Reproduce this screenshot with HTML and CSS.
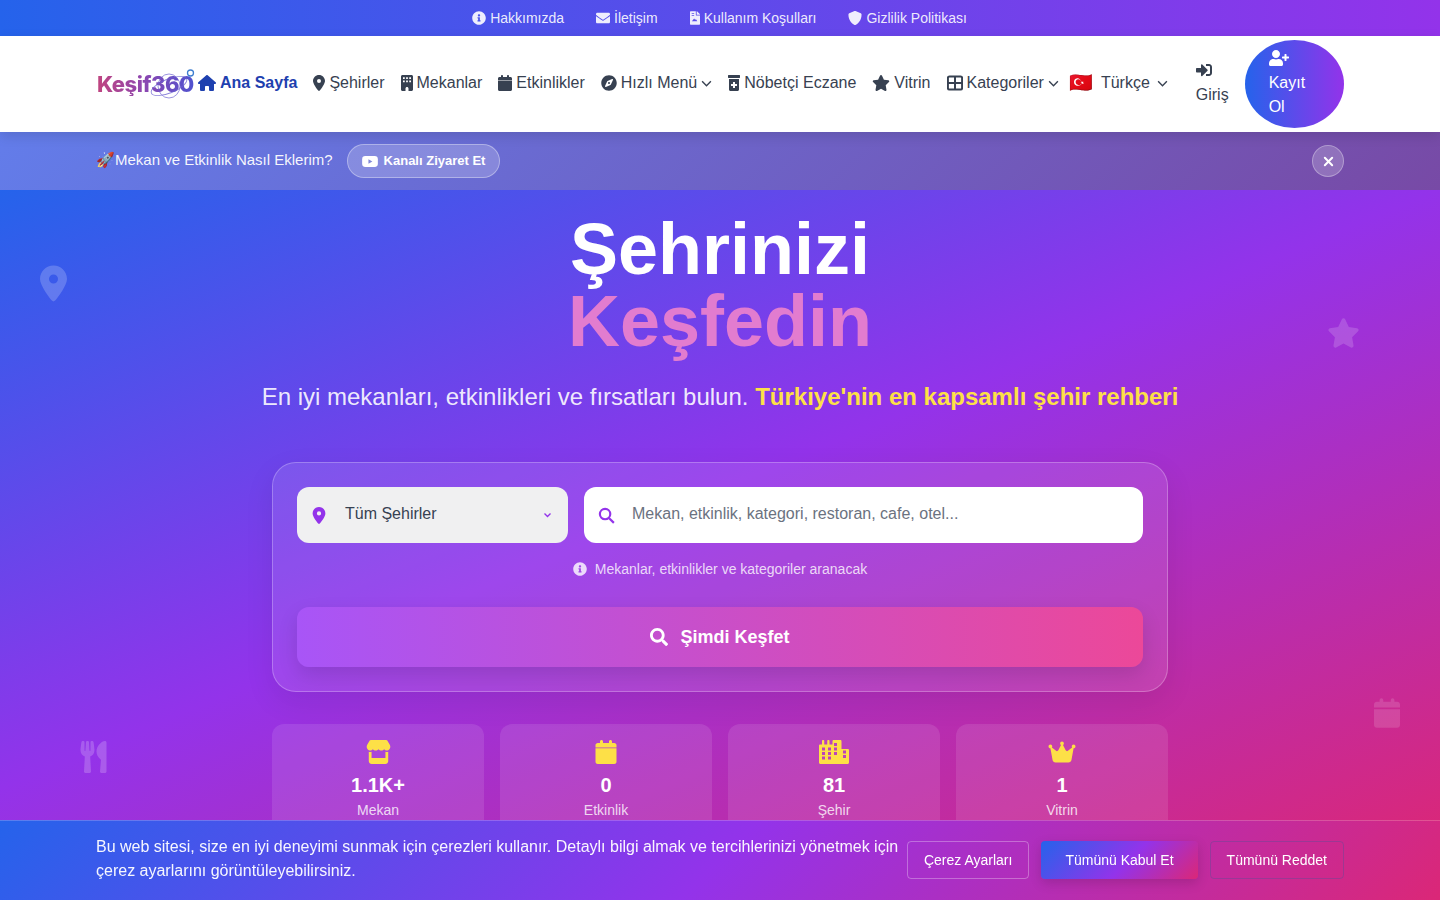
FILE: index.html
```html
<!DOCTYPE html>
<html lang="tr">
<head>
<meta charset="utf-8">
<title>Keşif360</title>
<link rel="stylesheet" href="styles.css">
</head>
<body>
<div class="topbar">
  <a class="top-link"><svg class="ti" viewBox="0 0 512 512"><path d="M256 8C119.043 8 8 119.083 8 256c0 136.997 111.043 248 248 248s248-111.003 248-248C504 119.083 392.957 8 256 8zm0 110c23.196 0 42 18.804 42 42s-18.804 42-42 42-42-18.804-42-42 18.804-42 42-42zm56 254c0 6.627-5.373 12-12 12h-88c-6.627 0-12-5.373-12-12v-24c0-6.627 5.373-12 12-12h12v-64h-12c-6.627 0-12-5.373-12-12v-24c0-6.627 5.373-12 12-12h64c6.627 0 12 5.373 12 12v100h12c6.627 0 12 5.373 12 12v24z"/></svg>Hakkımızda</a>
  <a class="top-link"><svg class="ti" viewBox="0 0 512 512"><path d="M502.3 190.8c3.9-3.1 9.7-.2 9.7 4.7V400c0 26.5-21.5 48-48 48H48c-26.5 0-48-21.5-48-48V195.6c0-5 5.7-7.8 9.7-4.7 22.4 17.4 52.1 39.5 154.1 113.6 21.1 15.4 56.7 47.8 92.2 47.6 35.7.3 72-32.8 92.3-47.6 102-74.1 131.6-96.3 154-113.7zM256 320c23.2.4 56.6-29.2 73.4-41.4 132.7-96.3 142.8-104.7 173.4-128.7 5.8-4.5 9.2-11.5 9.2-18.9v-19c0-26.5-21.5-48-48-48H48C21.5 64 0 85.5 0 112v19c0 7.4 3.4 14.3 9.2 18.9 30.6 23.9 40.7 32.4 173.4 128.7 16.8 12.2 50.2 41.8 73.4 41.4z"/></svg>İletişim</a>
  <a class="top-link"><svg class="ti ti-doc" viewBox="0 0 384 512"><path fill-rule="evenodd" d="M224 136V0H24C10.700 0 0 10.700 0 24v464c0 13.300 10.700 24 24 24h336c13.300 0 24-10.700 24-24V160H248c-13.200 0-24-10.800-24-24zM64 72h96v32H64zm0 64h96v32H64zm48 200l48-64 40 56 24-32 56 80H72zM384 122v6H256V0h6c6.400 0 12.500 2.500 17 7l98 98c4.500 4.500 7 10.600 7 17z"/></svg>Kullanım Koşulları</a>
  <a class="top-link"><svg class="ti" viewBox="0 0 512 512"><path d="M466.500 83.700l-192-80a48.150 48.150 0 0 0-36.900 0l-192 80C27.700 91.100 16 108.600 16 128c0 198.500 114.500 335.700 221.500 380.300 11.800 4.900 25.100 4.900 36.900 0C360.100 472.600 496 349.300 496 128c0-19.400-11.700-36.900-29.500-44.300z"/></svg>Gizlilik Politikası</a>
</div>

<header class="navbar">
  <a class="logo"><span class="logo-text">Keşif360</span>
    <svg class="logo-orbit" viewBox="0 0 100 34"><g fill="none" stroke="#6a5fd0" stroke-width=".9" opacity=".75"><ellipse cx="73" cy="19" rx="19" ry="7" transform="rotate(-22 73 19)"/><ellipse cx="73" cy="19" rx="11" ry="12"/></g><circle cx="94.500" cy="6" r="3" fill="none" stroke="#3f7fd0" stroke-width="1.300"/></svg>
  </a>
  <nav class="nav-list">
    <a class="nav-link active"><svg class="ni w18" viewBox="0 0 576 512"><path d="M575.800 255.500c0 18-15 32.100-32 32.100h-32l.7 160.200c0 2.700-.2 5.400-.5 8.100V472c0 22.100-17.900 40-40 40H456c-1.100 0-2.200 0-3.300-.1c-1.400 .1-2.800 .1-4.200 .1H416 392c-22.100 0-40-17.900-40-40V448 384c0-17.700-14.300-32-32-32H256c-17.700 0-32 14.300-32 32v64 24c0 22.100-17.900 40-40 40H160 128.100c-1.500 0-3-.1-4.500-.2c-1.200 .1-2.400 .2-3.600 .2H104c-22.100 0-40-17.900-40-40V360c0-.9 0-1.900 .1-2.800V287.600H32c-18 0-32-14-32-32.100c0-9 3-17 10-24L266.400 8c7-7 15-8 22-8s15 2 21 7L564.800 231.500c8 7 12 15 11 24z"/></svg>Ana Sayfa</a>
    <a class="nav-link"><svg class="ni w12" viewBox="0 0 384 512"><path d="M215.700 499.200C267 435 384 279.400 384 192C384 86 298 0 192 0S0 86 0 192c0 87.400 117 243 168.300 307.200c12.300 15.300 35.100 15.300 47.400 0zM192 128a64 64 0 1 1 0 128 64 64 0 1 1 0-128z"/></svg>Şehirler</a>
    <a class="nav-link"><svg class="ni w12" viewBox="0 0 384 512"><path fill-rule="evenodd" d="M48 0h288c26.500 0 48 21.500 48 48v416c0 26.500-21.500 48-48 48H240v-80c0-26.500-21.500-48-48-48s-48 21.500-48 48v80H48c-26.500 0-48-21.500-48-48V48C0 21.500 21.500 0 48 0zM64 72v56h56V72zm100 0v56h56V72zm100 0v56h56V72zM64 172v56h56v-56zm100 0v56h56v-56zm100 0v56h56v-56z"/></svg>Mekanlar</a>
    <a class="nav-link"><svg class="ni w14" viewBox="0 0 448 512"><path d="M96 32V64H48C21.500 64 0 85.500 0 112v56H448V112c0-26.500-21.500-48-48-48H352V32c0-17.700-14.300-32-32-32s-32 14.300-32 32V64H160V32c0-17.700-14.300-32-32-32S96 14.300 96 32zM448 184H0V464c0 26.500 21.500 48 48 48H400c26.500 0 48-21.500 48-48V184z"/></svg>Etkinlikler</a>
    <a class="nav-link"><svg class="ni w16" viewBox="0 0 496 512"><path d="M225.380 233.370c-12.500 12.500-12.500 32.760 0 45.250 12.490 12.500 32.760 12.500 45.250 0 12.500-12.500 12.500-32.760 0-45.250-12.500-12.490-32.760-12.490-45.250 0zM248 8C111 8 0 119 0 256s111 248 248 248 248-111 248-248S385 8 248 8zm126.140 148.050L308.170 300.400a31.938 31.938 0 0 1-15.770 15.770l-144.340 65.970c-16.650 7.610-33.810-9.550-26.200-26.200l65.980-144.350a31.938 31.938 0 0 1 15.770-15.770l144.340-65.970c16.650-7.600 33.800 9.550 26.190 26.200z"/></svg>Hızlı Menü<svg class="chev" viewBox="0 0 12 8"><path d="M1 1.500l5 5 5-5"/></svg></a>
    <a class="nav-link"><svg class="ni w12" viewBox="0 0 384 512"><path fill-rule="evenodd" d="M16 0h352c8.800 0 16 7.200 16 16v64c0 8.800-7.200 16-16 16H16C7.200 96 0 88.800 0 80V16C0 7.200 7.200 0 16 0zM32 128h320v336c0 26.500-21.500 48-48 48H80c-26.500 0-48-21.500-48-48V128zm128 96v64h-64v64h64v64h64v-64h64v-64h-64v-64z"/></svg>Nöbetçi Eczane</a>
    <a class="nav-link"><svg class="ni w18" viewBox="0 0 576 512"><path d="M316.900 18C311.600 7 300.400 0 288.100 0s-23.400 7-28.800 18L195 150.300 51.400 171.500c-12 1.800-22 10.200-25.700 21.700s-.7 24.200 7.900 32.700L137.800 329 113.200 474.700c-2 12 3 24.200 12.900 31.300s23 8 33.800 2.300l128.300-68.500 128.300 68.500c10.800 5.700 23.900 4.900 33.800-2.300s14.900-19.300 12.900-31.300L438.500 329 542.700 225.900c8.600-8.500 11.700-21.200 7.900-32.700s-13.700-19.900-25.700-21.700L381.200 150.300 316.900 18z"/></svg>Vitrin</a>
    <a class="nav-link"><svg class="ni w16 grid-ic" viewBox="0 0 16 16"><rect x=".9" y="1.500" width="14.200" height="13" rx="1.500"/><path d="M8 1.500v13M1 8h14"/></svg>Kategoriler<svg class="chev" viewBox="0 0 12 8"><path d="M1 1.500l5 5 5-5"/></svg></a>
    <a class="nav-link lang"><span class="flag">🇹🇷</span><span class="lang-name">Türkçe</span><svg class="chev" viewBox="0 0 12 8"><path d="M1 1.500l5 5 5-5"/></svg></a>
    <a class="nav-link login"><svg class="ni w16" viewBox="0 0 512 512"><path d="M416 448h-84c-6.600 0-12-5.400-12-12v-40c0-6.600 5.400-12 12-12h84c17.700 0 32-14.300 32-32V160c0-17.700-14.300-32-32-32h-84c-6.600 0-12-5.400-12-12V76c0-6.600 5.400-12 12-12h84c53 0 96 43 96 96v192c0 53-43 96-96 96zm-47-201L201 79c-15-15-41-4.500-41 17v96H24c-13.300 0-24 10.700-24 24v96c0 13.300 10.700 24 24 24h136v96c0 21.500 26 32 41 17l168-168c9.300-9.400 9.300-24.600 0-34z"/></svg><span>Giriş</span></a>
    <a class="register"><svg class="ni reg-ic" viewBox="0 0 640 512"><path d="M624 208h-64v-64c0-8.800-7.200-16-16-16h-32c-8.800 0-16 7.200-16 16v64h-64c-8.800 0-16 7.200-16 16v32c0 8.800 7.200 16 16 16h64v64c0 8.800 7.200 16 16 16h32c8.800 0 16-7.200 16-16v-64h64c8.800 0 16-7.200 16-16v-32c0-8.800-7.200-16-16-16zm-400 48c70.700 0 128-57.300 128-128S294.700 0 224 0 96 57.300 96 128s57.300 128 128 128zm89.600 32h-16.700c-22.200 10.200-46.900 16-72.900 16s-50.600-5.800-72.900-16h-16.700C60.200 288 0 348.200 0 422.400V464c0 26.500 21.500 48 48 48h352c26.500 0 48-21.500 48-48v-41.600c0-74.200-60.200-134.400-134.400-134.400z"/></svg><span>Kayıt</span><span>Ol</span></a>
  </nav>
</header>

<main class="stage">
  <div class="banner">
    <div class="banner-left">
      <span class="banner-text">🚀Mekan ve Etkinlik Nasıl Eklerim?</span>
      <a class="channel-btn"><svg class="yt" viewBox="0 0 20 14"><rect width="20" height="14" rx="4" fill="#fff"/><path d="M8 4.200v5.600L13 7z" fill="#8188d8"/></svg>Kanalı Ziyaret Et</a>
    </div>
    <button class="close-btn" aria-label="Kapat"><svg viewBox="0 0 12 12"><path d="M2 2l8 8M10 2l-8 8"/></svg></button>
  </div>

  <section class="hero">
    <svg class="deco deco-pin" viewBox="0 0 384 512"><path d="M215.700 499.200C267 435 384 279.400 384 192C384 86 298 0 192 0S0 86 0 192c0 87.400 117 243 168.300 307.200c12.300 15.300 35.100 15.300 47.400 0zM192 128a64 64 0 1 1 0 128 64 64 0 1 1 0-128z"/></svg>
    <svg class="deco deco-star" viewBox="0 0 576 512"><path d="M316.900 18C311.600 7 300.400 0 288.100 0s-23.400 7-28.800 18L195 150.300 51.400 171.500c-12 1.800-22 10.200-25.700 21.700s-.7 24.200 7.900 32.700L137.800 329 113.200 474.700c-2 12 3 24.200 12.900 31.300s23 8 33.800 2.300l128.300-68.500 128.300 68.500c10.800 5.700 23.900 4.900 33.800-2.300s14.900-19.300 12.900-31.300L438.500 329 542.700 225.900c8.600-8.500 11.700-21.200 7.900-32.700s-13.700-19.900-25.700-21.700L381.200 150.300 316.900 18z"/></svg>
    <svg class="deco deco-food" viewBox="0 0 416 512"><path d="M207.900 15.200c.8 4.700 16.100 94.500 16.100 128.800 0 52.300-27.800 89.600-68.900 104.600L168 486.700c.7 13.700-10.200 25.300-24 25.300H80c-13.700 0-24.700-11.500-24-25.300l12.900-238.100C27.700 233.600 0 196.200 0 144 0 109.600 15.300 19.900 16.100 15.200 19.300-5.100 61.400-5.400 64 16.300v141.200c1.300 3.400 15.100 3.200 16 0 1.400-25.300 7.900-139.200 8-141.800 3.300-20.800 44.700-20.800 47.900 0 .2 2.700 6.600 116.500 8 141.800.9 3.200 14.800 3.400 16 0V16.300c2.600-21.600 44.800-21.400 48 0zm119.200 285.700l-15 185.100c-1.200 14 9.900 26 23.900 26h56c13.300 0 24-10.700 24-24V24c0-13.200-10.700-24-24-24-82.500 0-221.400 178.500-64.900 300.900z"/></svg>
    <svg class="deco deco-cal" viewBox="0 0 448 512"><path d="M96 32V64H48C21.500 64 0 85.500 0 112v48H448V112c0-26.500-21.500-48-48-48H352V32c0-17.700-14.300-32-32-32s-32 14.300-32 32V64H160V32c0-17.700-14.300-32-32-32S96 14.300 96 32zM448 192H0V464c0 26.500 21.500 48 48 48H400c26.500 0 48-21.500 48-48V192z"/></svg>

    <h1 class="title">Şehrinizi<span class="title-accent">Keşfedin</span></h1>
    <p class="subtitle">En iyi mekanları, etkinlikleri ve fırsatları bulun. <strong>Türkiye'nin en kapsamlı şehir rehberi</strong></p>

    <form class="search-card">
      <div class="search-row">
        <div class="city-select">
          <svg class="pin-ic" viewBox="0 0 384 512"><path d="M215.700 499.200C267 435 384 279.400 384 192C384 86 298 0 192 0S0 86 0 192c0 87.400 117 243 168.300 307.200c12.300 15.300 35.100 15.300 47.400 0zM192 128a64 64 0 1 1 0 128 64 64 0 1 1 0-128z"/></svg>
          <span class="city-name">Tüm Şehirler</span>
          <svg class="select-chev" viewBox="0 0 12 8"><path d="M2 2l4 4 4-4"/></svg>
        </div>
        <div class="search-input">
          <svg class="search-ic" viewBox="0 0 18 18"><circle cx="7.500" cy="7.500" r="5.500"/><path d="M11.800 11.800l5 5"/></svg>
          <span class="placeholder">Mekan, etkinlik, kategori, restoran, cafe, otel...</span>
        </div>
      </div>
      <p class="hint"><svg class="hint-ic" viewBox="0 0 512 512"><path d="M256 8C119.043 8 8 119.083 8 256c0 136.997 111.043 248 248 248s248-111.003 248-248C504 119.083 392.957 8 256 8zm0 110c23.196 0 42 18.804 42 42s-18.804 42-42 42-42-18.804-42-42 18.804-42 42-42zm56 254c0 6.627-5.373 12-12 12h-88c-6.627 0-12-5.373-12-12v-24c0-6.627 5.373-12 12-12h12v-64h-12c-6.627 0-12-5.373-12-12v-24c0-6.627 5.373-12 12-12h64c6.627 0 12 5.373 12 12v100h12c6.627 0 12 5.373 12 12v24z"/></svg>Mekanlar, etkinlikler ve kategoriler aranacak</p>
      <button class="explore-btn" type="button"><svg viewBox="0 0 512 512"><path d="M505 442.700L405.300 343c-4.500-4.500-10.600-7-17-7H372c27.600-35.300 44-79.700 44-128C416 93.100 322.900 0 208 0S0 93.100 0 208s93.100 208 208 208c48.300 0 92.700-16.400 128-44v16.300c0 6.400 2.500 12.500 7 17l99.700 99.700c9.400 9.400 24.600 9.400 33.900 0l28.300-28.300c9.400-9.400 9.400-24.600.1-34zM208 336c-70.700 0-128-57.200-128-128 0-70.700 57.200-128 128-128 70.700 0 128 57.200 128 128 0 70.700-57.200 128-128 128z"/></svg>Şimdi Keşfet</button>
    </form>

    <div class="stats">
      <div class="stat"><svg class="stat-ic ic-store" viewBox="0 0 576 512" preserveAspectRatio="none"><path d="M547.600 103.800L490.300 13.100C485.200 5 476.100 0 466.400 0H109.600C99.900 0 90.800 5 85.700 13.100L28.300 103.800c-29.600 46.800-3.400 111.900 51.900 119.400c4 .5 8.100 .8 12.100 .8c26.100 0 49.300-11.400 65.200-29c15.900 17.600 39.100 29 65.200 29c26.100 0 49.300-11.400 65.200-29c15.900 17.600 39.100 29 65.200 29c26.200 0 49.300-11.400 65.200-29c16 17.600 39.100 29 65.200 29c4.100 0 8.100-.3 12.100-.8c55.500-7.400 81.800-72.500 52.100-119.400zM499.700 254.900l-.1 0c-5.300 .7-10.700 1.100-16.200 1.100c-12.400 0-24.300-1.900-35.400-5.300V384H128V250.600c-11.200 3.500-23.200 5.400-35.600 5.400c-5.500 0-11-.4-16.300-1.100l-.1 0c-4.100-.6-8.100-1.300-12-2.300V384v64c0 35.300 28.700 64 64 64H448c35.300 0 64-28.700 64-64V384 252.600c-4 1-8 1.800-12.300 2.300z"/></svg><b class="stat-num">1.1K+</b><span class="stat-label">Mekan</span></div>
      <div class="stat"><svg class="stat-ic" viewBox="0 0 448 512"><path d="M96 32V64H48C21.500 64 0 85.500 0 112v48H448V112c0-26.500-21.500-48-48-48H352V32c0-17.700-14.300-32-32-32s-32 14.300-32 32V64H160V32c0-17.700-14.300-32-32-32S96 14.300 96 32zM448 176H0V464c0 26.500 21.500 48 48 48H400c26.500 0 48-21.500 48-48V176z"/></svg><b class="stat-num">0</b><span class="stat-label">Etkinlik</span></div>
      <div class="stat"><svg class="stat-ic" viewBox="0 0 640 512"><path fill-rule="evenodd" d="M616 192H480V24c0-13.260-10.740-24-24-24H312c-13.260 0-24 10.740-24 24v72h-64V16c0-8.840-7.160-16-16-16h-16c-8.840 0-16 7.160-16 16v80h-64V16c0-8.840-7.160-16-16-16H80c-8.840 0-16 7.160-16 16v80H24c-13.260 0-24 10.740-24 24v360c0 17.670 14.330 32 32 32h576c17.670 0 32-14.330 32-32V216c0-13.260-10.750-24-24-24zM64 352h64v64H64zm0-96h64v64H64zm0-96h64v64H64zm128 192h64v64h-64zm0-96h64v64h-64zm0-96h64v64h-64zm128 96h64v64h-64zm0-96h64v64h-64zm0-96h64v64h-64zm192 256h64v64h-64zm0-96h64v64h-64z"/></svg><b class="stat-num">81</b><span class="stat-label">Şehir</span></div>
      <div class="stat"><svg class="stat-ic" viewBox="0 0 576 512"><path d="M309 106c11.400-7 19-19.700 19-34c0-22.100-17.900-40-40-40s-40 17.900-40 40c0 14.400 7.600 27 19 34L209.700 220.600c-9.100 18.200-32.700 23.400-48.600 10.700L72 160c5-6.700 8-15 8-24c0-22.100-17.900-40-40-40S0 113.900 0 136s17.900 40 40 40c.2 0 .5 0 .7 0L86.400 427.400c5.500 30.400 32 52.600 63 52.600H426.600c30.900 0 57.400-22.100 63-52.600L535.300 176c.2 0 .5 0 .7 0c22.100 0 40-17.900 40-40s-17.900-40-40-40s-40 17.900-40 40c0 9 3 17.300 8 24l-89.100 71.300c-15.900 12.700-39.500 7.500-48.600-10.700L309 106z"/></svg><b class="stat-num">1</b><span class="stat-label">Vitrin</span></div>
    </div>
  </section>
</main>

<aside class="cookie">
  <p class="cookie-text">Bu web sitesi, size en iyi deneyimi sunmak için çerezleri kullanır. Detaylı bilgi almak ve tercihlerinizi yönetmek için çerez ayarlarını görüntüleyebilirsiniz.</p>
  <div class="cookie-actions">
    <button class="ck-btn ck-settings">Çerez Ayarları</button>
    <button class="ck-btn ck-accept">Tümünü Kabul Et</button>
    <button class="ck-btn ck-reject">Tümünü Reddet</button>
  </div>
</aside>
</body>
</html>
```

FILE: styles.css
```css
* { box-sizing: border-box; }
html, body { margin: 0; height: 900px; overflow: hidden; }
body { font-family: "Liberation Sans", Arial, sans-serif; font-size: 16px; line-height: 24px; color: #374151; background: #fff; }
a { color: inherit; text-decoration: none; }
svg { display: block; fill: currentColor; flex: none; }

.topbar { height: 36px; padding-right: 1px; display: flex; justify-content: center; align-items: center; gap: 32px; background: linear-gradient(90deg, #2563eb, #9333ea); color: rgba(255,255,255,.9); font-size: 14px; }
.top-link { display: flex; align-items: center; gap: 4px; }
.ti { width: 14px; height: 14px; }
.ti-doc { width: 10px; }

.navbar { position: relative; z-index: 3; height: 96px; padding: 0 96px; display: flex; align-items: center; background: #fff; box-shadow: 0 4px 12px rgba(0,0,0,.12); }
.logo { position: relative; width: 102px; flex: none; height: 34px; padding-left: 1px; display: flex; align-items: center; }
.logo-text { font-family: Inter, "Liberation Sans", sans-serif; font-weight: 800; font-size: 22px; letter-spacing: -.5px; background: linear-gradient(90deg, #c0447f, #9046ae 45%, #4f52cf); -webkit-background-clip: text; background-clip: text; color: transparent; }
.logo-orbit { position: absolute; left: 0; top: 0; width: 100px; height: 34px; }
.nav-list { display: flex; align-items: center; gap: 16px; flex: 1; }
.nav-link { display: flex; align-items: center; gap: 4px; white-space: nowrap; padding-bottom: 2px; }
.nav-link.active { color: #1e40af; font-weight: 700; }
.ni { height: 16px; }
.w12 { width: 12px; }
.w14 { width: 14px; }
.w16 { width: 16px; }
.w18 { width: 18px; }
.grid-ic { fill: none; stroke: currentColor; stroke-width: 2; }
.chev { width: 11px; height: 7px; fill: none; stroke: currentColor; stroke-width: 1.600; }
.lang { margin-left: -6px; gap: 0; }
.flag { width: 22px; font-size: 19px; font-family: "Noto Color Emoji", sans-serif; line-height: 24px; }
.lang-name { margin: 0 7px 0 10px; }
.login { margin-left: 12px; flex-direction: column; align-items: flex-start; gap: 0; padding: 7px 0 9px; }
.login .ni { margin: 3px 0 5px; }
.register { display: flex; flex-direction: column; width: 99px; height: 88px; padding: 7px 24px 9px; border-radius: 50%; color: #fff; background: linear-gradient(90deg, #2563eb, #9333ea); }
.reg-ic { width: 20px; height: 16px; margin: 3px 0 5px; }

.stage { position: relative; height: 768px; background: linear-gradient(157.400deg, #2563eb 4.200%, #9333ea 48%, #db2777 96%); }
.banner { height: 58px; padding: 0 96px; display: flex; align-items: center; justify-content: space-between; background: linear-gradient(135deg, rgba(102,126,234,.95), rgba(118,75,162,.95)); color: rgba(255,255,255,.95); }
.banner-left { display: flex; align-items: center; gap: 14px; }
.banner-text { font-size: 15px; padding-bottom: 2px; }
.channel-btn { display: flex; align-items: center; gap: 6px; height: 34px; padding: 0 14px; font-size: 13px; font-weight: 700; border: 1px solid rgba(255,255,255,.35); border-radius: 17px; background: rgba(255,255,255,.2); color: #fff; }
.yt { width: 16px; height: 11px; }
.close-btn { width: 32px; height: 32px; padding: 0; border: 1px solid rgba(255,255,255,.3); border-radius: 50%; background: rgba(255,255,255,.2); display: flex; align-items: center; justify-content: center; }
.close-btn svg { width: 11px; height: 11px; fill: none; stroke: #fff; stroke-width: 2.200; stroke-linecap: round; }

.hero { position: relative; padding-top: 23px; color: #fff; text-align: center; }
.deco { position: absolute; fill: rgba(255,255,255,.2); }
.deco-pin { left: 40px; top: 75px; width: 27px; height: 37px; }
.deco-star { left: 1327px; top: 127px; width: 33px; height: 32px; fill: rgba(255,255,255,.17); }
.deco-food { left: 80px; top: 551px; width: 27px; height: 32px; }
.deco-cal { left: 1374px; top: 508px; width: 26px; height: 30px; fill: rgba(255,255,255,.14); }
.title { margin: 0; font-size: 72px; line-height: 72px; font-weight: 700; }
.title-accent { display: block; color: #e27ccf; }
.subtitle { margin: 24px 0 49px; font-size: 24px; line-height: 32px; color: rgba(255,255,255,.9); }
.subtitle strong { color: #fde047; }

.search-card { width: 896px; height: 230px; margin: 0 auto; padding: 24px; border: 1px solid rgba(255,255,255,.25); border-radius: 24px; background: rgba(255,255,255,.1); box-shadow: 0 10px 30px rgba(0,0,0,.08); }
.search-row { display: flex; gap: 16px; }
.city-select { width: 271px; height: 56px; flex: none; padding: 0 16px 0 15px; display: flex; align-items: center; border-radius: 12px; background: #f0f0f1; color: #374151; }
.pin-ic { width: 14px; height: 17px; color: #9333ea; }
.city-name { flex: 1; margin-left: 19px; padding-bottom: 2px; text-align: left; }
.select-chev { width: 9px; height: 6px; fill: none; stroke: #9333ea; stroke-width: 1.800; }
.search-input { flex: 1; height: 56px; padding: 0 16px 0 14px; display: flex; align-items: center; border-radius: 12px; background: #fff; }
.search-ic { width: 17px; height: 17px; fill: none; stroke: #9333ea; stroke-width: 2.300; }
.placeholder { margin-left: 17px; padding-bottom: 2px; color: #6b7280; }
.hint { margin: 16px 0 28px; height: 20px; display: flex; justify-content: center; align-items: center; gap: 8px; font-size: 14px; line-height: 20px; color: rgba(255,255,255,.8); }
.hint-ic { width: 14px; height: 14px; }
.explore-btn { width: 100%; height: 60px; padding: 0; border: 0; border-radius: 12px; display: flex; align-items: center; justify-content: center; gap: 12px; color: #fff; font: 700 18px/28px "Liberation Sans", Arial, sans-serif; background: linear-gradient(90deg, #a855f7, #ec4899); box-shadow: 0 8px 20px rgba(0,0,0,.12); }
.explore-btn svg { width: 18px; height: 18px; }

.stats { width: 896px; margin: 32px auto 0; display: grid; grid-template-columns: repeat(4, 212px); gap: 16px; }
.stat { height: 130px; padding-top: 16px; display: flex; flex-direction: column; align-items: center; border-radius: 12px; background: rgba(255,255,255,.1); }
.stat-ic { height: 24px; width: 30px; color: #fde047; }
.ic-store { width: 25px; }
.stat-num { margin-top: 7px; font-size: 20px; line-height: 28px; }
.stat-label { margin-top: 1px; font-size: 14px; line-height: 20px; color: rgba(255,255,255,.8); }

.cookie { position: fixed; left: 0; right: 0; bottom: 0; z-index: 5; height: 80px; padding: 0 96px 2px; display: flex; align-items: center; gap: 8px; border-top: 1px solid rgba(255,255,255,.2); background: linear-gradient(135deg, #2563eb 0%, #9333ea 50%, #db2777 100%); }
.cookie-text { margin: 0 0 2px; flex: 1; color: rgba(255,255,255,.95); }
.cookie-actions { display: flex; gap: 12px; flex: none; }
.ck-btn { height: 38px; padding: 0 16px; border-radius: 4px; font: 14px/20px "Liberation Sans", Arial, sans-serif; color: #fff; background: transparent; border: 1px solid rgba(255,255,255,.3); }
.ck-accept { padding: 0 24px; border: 0; background: linear-gradient(135deg, #2563eb, #9333ea 55%, #db2777); box-shadow: 0 4px 12px rgba(0,0,0,.15); }
.ck-reject { border-color: rgba(110,70,150,.5); }
```
